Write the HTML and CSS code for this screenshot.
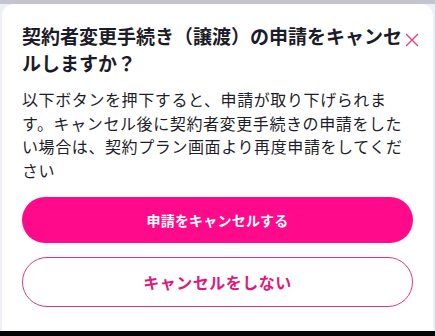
FILE: index.html
```html
<!DOCTYPE html>
<html lang="ja">
<head>
<meta charset="utf-8">
<link rel="stylesheet" href="styles.css">
</head>
<body>
<div class="page">
  <div class="backdrop"></div>
  <div class="sheet">
    <div class="header">
      <h1 class="title">契約者変更手続き（譲渡）の申請をキャンセルしますか？</h1>
      <button class="close" aria-label="閉じる">
        <svg width="14" height="14" viewBox="0 0 14 14"><path d="M1.5 1.5 L12.5 12.5 M12.5 1.5 L1.5 12.5" stroke="#e5407c" stroke-width="1.4" fill="none" stroke-linecap="round"/></svg>
      </button>
    </div>
    <p class="desc">以下ボタンを押下すると、申請が取り下げられます。キャンセル後に契約者変更手続きの申請をしたい場合は、契約プラン画面より再度申請をしてください</p>
    <div class="actions">
      <button class="btn btn-primary">申請をキャンセルする</button>
      <button class="btn btn-secondary">キャンセルをしない</button>
    </div>
  </div>
  <div class="homebar"></div>
</div>
</body>
</html>
```

FILE: styles.css
```css
* { box-sizing: border-box; }
html, body {
  margin: 0;
  padding: 0;
  background: #eef0f7;
  font-family: "Noto Sans CJK JP", "Noto Sans", sans-serif;
  color: #1c1c28;
}
.page {
  width: 435px;
  height: 336px;
  display: flex;
  flex-direction: column;
  overflow: hidden;
}
.backdrop {
  height: 4px;
  flex: none;
  background: #c3c4cd;
}
.sheet {
  flex: 1;
  margin: 0 2px;
  background: #fff;
  border-radius: 12px 12px 0 0;
  padding: 18px 20px 0 20px;
  display: flex;
  flex-direction: column;
}
.header {
  display: flex;
  align-items: flex-start;
  gap: 2px;
  margin-right: -6px;
}
.title {
  flex: 1;
  margin: 0;
  font-size: 19px;
  line-height: 27px;
  font-weight: 700;
  color: #1c1c28;
}
.close {
  flex: none;
  width: 14px;
  height: 14px;
  margin-top: 11px;
  padding: 0;
  border: 0;
  background: none;
  display: flex;
}
.desc {
  margin: 12px 0 0 0;
  font-size: 16px;
  line-height: 23.5px;
  letter-spacing: 0.6px;
  color: #1e1e2a;
}
.actions {
  margin-top: 15px;
  display: flex;
  flex-direction: column;
  gap: 14px;
}
.btn {
  width: 100%;
  border-radius: 999px;
  font-family: inherit;
  font-weight: 700;
  padding: 0;
}
.btn-primary {
  height: 46px;
  background: #ff0a8a;
  border: 0;
  color: #fff;
  font-size: 14px;
  letter-spacing: 0.2px;
}
.btn-secondary {
  height: 50px;
  background: #fff;
  border: 1.3px solid #e2357f;
  color: #e0197d;
  font-size: 16px;
  letter-spacing: 0.5px;
}
.homebar {
  height: 5px;
  flex: none;
  background: #050505;
}
```
